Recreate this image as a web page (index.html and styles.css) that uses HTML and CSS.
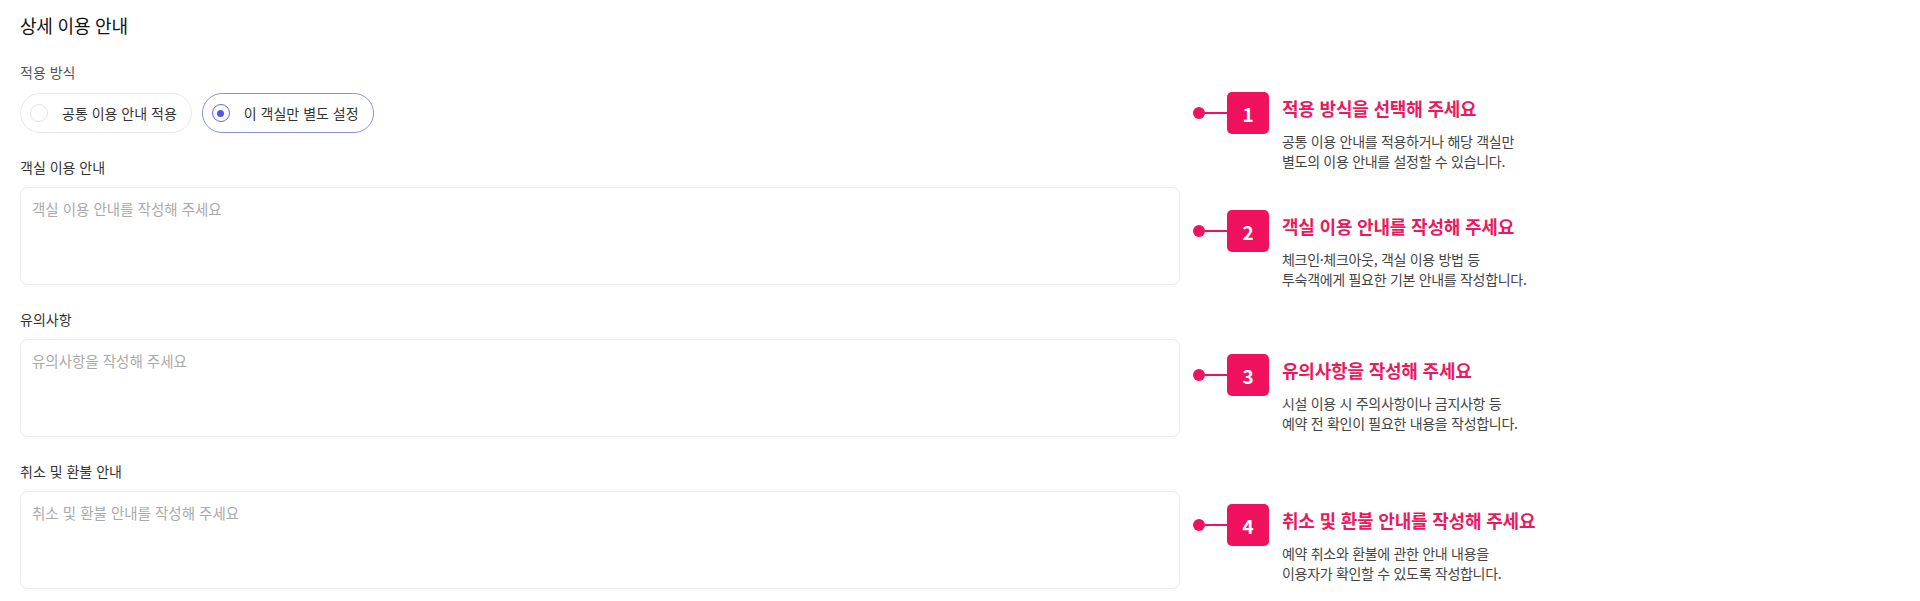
FILE: index.html
```html
<!DOCTYPE html>
<html lang="ko">
<head>
    <meta charset="utf-8">
    <title>상세 이용 안내</title>
    <link rel="stylesheet" href="styles.css">
</head>
<body>
    <div class="page">
        <div class="form">
            <h2 class="form-title">상세 이용 안내</h2>

            <div class="field">
                <p class="field-label muted">적용 방식</p>
                <div class="choices">
                    <label class="choice">
                        <span class="radio"></span>
                        <span>공통 이용 안내 적용</span>
                    </label>
                    <label class="choice checked">
                        <span class="radio"></span>
                        <span>이 객실만 별도 설정</span>
                    </label>
                </div>
            </div>

            <div class="field">
                <p class="field-label">객실 이용 안내</p>
                <textarea class="area" placeholder="객실 이용 안내를 작성해 주세요"></textarea>
            </div>

            <div class="field">
                <p class="field-label">유의사항</p>
                <textarea class="area" placeholder="유의사항을 작성해 주세요"></textarea>
            </div>

            <div class="field">
                <p class="field-label">취소 및 환불 안내</p>
                <textarea class="area" placeholder="취소 및 환불 안내를 작성해 주세요"></textarea>
            </div>
        </div>

        <div class="guides">
            <div class="guide guide-1">
                <div class="guide-mark">
                    <span class="dot"></span>
                    <span class="line"></span>
                    <span class="num">1</span>
                </div>
                <div class="guide-text">
                    <h4>적용 방식을 선택해 주세요</h4>
                    <p>공통 이용 안내를 적용하거나 해당 객실만<br>별도의 이용 안내를 설정할 수 있습니다.</p>
                </div>
            </div>
            <div class="guide guide-2">
                <div class="guide-mark">
                    <span class="dot"></span>
                    <span class="line"></span>
                    <span class="num">2</span>
                </div>
                <div class="guide-text">
                    <h4>객실 이용 안내를 작성해 주세요</h4>
                    <p>체크인·체크아웃, 객실 이용 방법 등<br>투숙객에게 필요한 기본 안내를 작성합니다.</p>
                </div>
            </div>
            <div class="guide guide-3">
                <div class="guide-mark">
                    <span class="dot"></span>
                    <span class="line"></span>
                    <span class="num">3</span>
                </div>
                <div class="guide-text">
                    <h4>유의사항을 작성해 주세요</h4>
                    <p>시설 이용 시 주의사항이나 금지사항 등<br>예약 전 확인이 필요한 내용을 작성합니다.</p>
                </div>
            </div>
            <div class="guide guide-4">
                <div class="guide-mark">
                    <span class="dot"></span>
                    <span class="line"></span>
                    <span class="num">4</span>
                </div>
                <div class="guide-text">
                    <h4>취소 및 환불 안내를 작성해 주세요</h4>
                    <p>예약 취소와 환불에 관한 안내 내용을<br>이용자가 확인할 수 있도록 작성합니다.</p>
                </div>
            </div>
        </div>
    </div>
</body>
</html>
```

FILE: styles.css
```css
body {
    margin: 0;
    background: #fff;
    font-family: "Noto Sans CJK KR", "Noto Sans", sans-serif;
    color: #222;
}

.page {
    display: flex;
    gap: 13px;
    padding: 12px 20px;
}

.form {
    width: 1160px;
    display: flex;
    flex-direction: column;
    gap: 24px;
}

.form-title {
    margin: 0;
    font-size: 18px;
    line-height: 26px;
    font-weight: normal;
    color: #111;
    letter-spacing: -0.2px;
}

.field {
    display: flex;
    flex-direction: column;
}

.field-label {
    margin: 0 0 10px;
    font-size: 14px;
    line-height: 20px;
    color: #333;
}

.field-label.muted {
    color: #555;
    margin-bottom: 11px;
}

.choices {
    display: flex;
    gap: 10px;
}

.choice {
    display: flex;
    align-items: center;
    gap: 14px;
    height: 40px;
    box-sizing: border-box;
    padding: 0 14px 0 9px;
    border: 1px solid #e8e8e8;
    border-radius: 20px;
    font-size: 14px;
    color: #333;
    cursor: pointer;
}

.radio {
    width: 18px;
    height: 18px;
    box-sizing: border-box;
    border: 1px solid #e4e4e4;
    border-radius: 50%;
    display: flex;
    align-items: center;
    justify-content: center;
}

.choice.checked {
    border-color: #8f8fe3;
}

.choice.checked .radio {
    border: 1.5px solid #6a6ae6;
}

.choice.checked .radio::after {
    content: "";
    width: 7px;
    height: 7px;
    border-radius: 50%;
    background: #5555e4;
}

.area {
    display: block;
    height: 98px;
    box-sizing: border-box;
    padding: 11px 11px;
    border: 1px solid #ebebeb;
    border-radius: 8px;
    resize: none;
    font-family: inherit;
    font-size: 14.5px;
    line-height: 20px;
    outline: none;
}

.area::placeholder {
    color: #aaa;
}

.guides {
    display: flex;
    flex-direction: column;
    padding-top: 80px;
}

.guide {
    display: flex;
    align-items: flex-start;
}

.guide-2 { margin-top: 39px; }
.guide-3 { margin-top: 65px; }
.guide-4 { margin-top: 71px; }

.guide-mark {
    display: flex;
    align-items: center;
    height: 42px;
}

.dot {
    width: 12px;
    height: 12px;
    border-radius: 50%;
    background: #ee1260;
}

.line {
    width: 22px;
    height: 2px;
    background: #ee1260;
}

.num {
    width: 42px;
    height: 42px;
    border-radius: 5px;
    background: #f0115e;
    color: #fff;
    font-weight: bold;
    font-size: 19px;
    display: flex;
    align-items: center;
    justify-content: center;
}

.guide-text {
    margin-left: 13px;
    padding-top: 4px;
}

.guide-text h4 {
    margin: 0;
    font-size: 18px;
    line-height: 24px;
    font-weight: bold;
    color: #ea1a60;
    letter-spacing: -0.2px;
}

.guide-text p {
    margin: 11px 0 0;
    font-size: 14px;
    line-height: 20px;
    color: #444;
    letter-spacing: -0.3px;
}
```
